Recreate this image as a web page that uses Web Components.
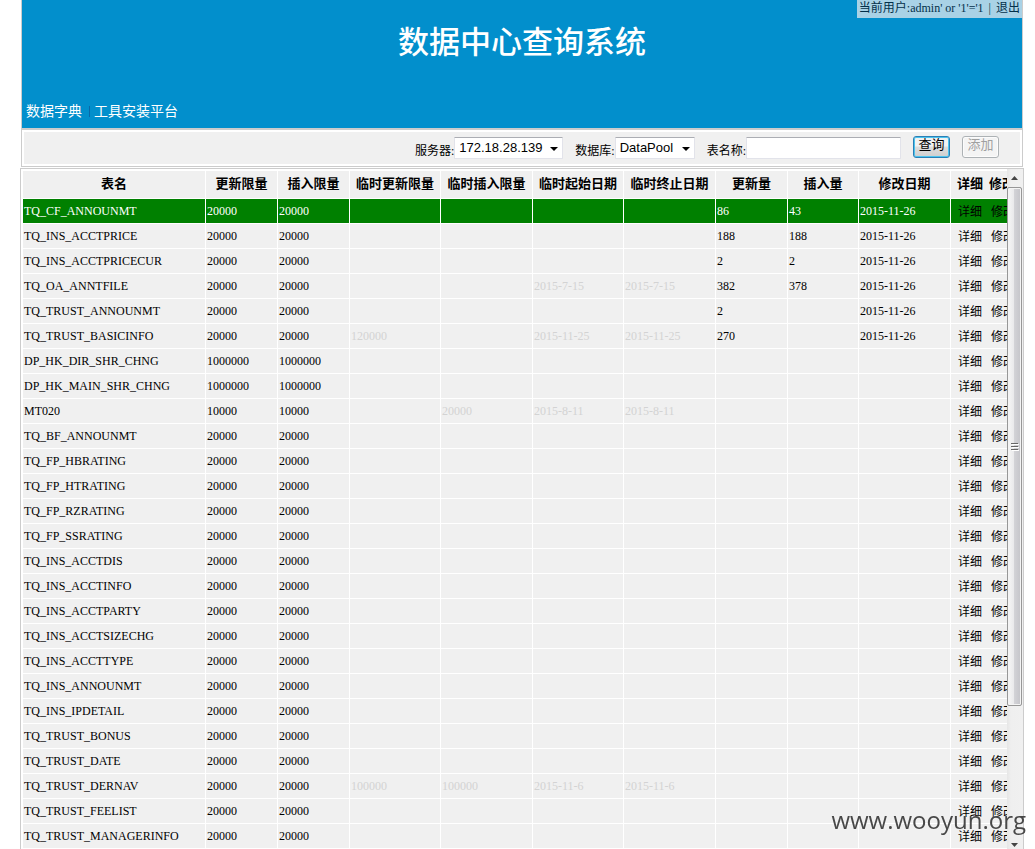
<!DOCTYPE html>
<html lang="zh-CN">
<head>
<meta charset="utf-8">
<title>数据中心查询系统</title>
<style>
  html, body { margin: 0; height: 100%; overflow: hidden; }
  body {
    background: #fff;
    color: #000;
    font: 12px/18px "Liberation Serif", "Noto Sans CJK SC", serif;
  }
</style>
</head>
<body>
<data-center-app></data-center-app>

<template id="app-template">
  <style>
    :host { display: block; }
    .page {
      display: flex;
      flex-direction: column;
      height: calc(100vh + 6px);
      margin: 0 11px 0 20px;
    }
    site-banner, search-bar { margin: 0 1px; }
    search-bar { margin-bottom: 1px; }
    limit-table { flex: 1; min-height: 0; }
    site-mark { position: fixed; right: 9px; bottom: 12px; }
  </style>
  <div class="page">
    <site-banner>
      <span slot="title">数据中心查询系统</span>
      <span slot="user">当前用户:admin' or '1'='1</span>
    </site-banner>
    <search-bar></search-bar>
    <limit-table></limit-table>
  </div>
  <site-mark>www.wooyun.org</site-mark>
</template>

<template id="banner-template">
  <style>
    :host { display: block; }
    header {
      display: flex;
      flex-direction: column;
      position: relative;
      box-sizing: border-box;
      height: 130px;
      border: 1px solid #ccc;
      border-width: 0 1px 2px;
      background: #028fcc;
      color: #fff;
    }
    h1 {
      margin: 18px 0 0;
      text-align: center;
      font: 500 31px/44px "Noto Sans CJK SC", sans-serif;
    }
    nav {
      display: flex;
      align-items: center;
      margin: auto 0 8px 4px;
      font: 14px/20px "Noto Sans CJK SC", sans-serif;
    }
    a { color: inherit; text-decoration: none; }
    .bar { width: 1px; height: 11px; margin: 3px 4px 0 7px; background: #0868a8; }
    .user {
      position: absolute;
      top: 0;
      right: 0;
      height: 18px;
      padding: 0 2px;
      background: #a9d2e6;
      color: #03304a;
      line-height: 16px;
      white-space: pre;
    }
    .user i { font-style: normal; margin: 0 5px; }
  </style>
  <header>
    <h1><slot name="title"></slot></h1>
    <nav>
      <a href="#dictionary">数据字典</a><span class="bar"></span><a href="#tools">工具安装平台</a>
    </nav>
    <div class="user"><slot name="user"></slot><i>|</i><a href="#logout">退出</a></div>
  </header>
</template>

<template id="search-template">
  <style>
    :host { display: block; }
    form {
      display: flex;
      justify-content: flex-end;
      align-items: flex-start;
      gap: 12px;
      box-sizing: border-box;
      height: 37px;
      padding: 5px 23px 0 0;
      margin: 0;
      border: 1px solid #ccc;
      border-top: 0;
      background: #f0f0f0;
      box-shadow: inset 0 0 0 2px #fff;
    }
    .field { display: flex; align-items: flex-start; }
    .field label { padding: 6px 0 0; line-height: 20px; }
    .pick { position: relative; display: flex; margin-top: 2px; }
    .pick svg { position: absolute; right: 4px; top: 10px; pointer-events: none; }
    select, input {
      appearance: none;
      box-sizing: border-box;
      height: 22px;
      margin: 0;
      padding: 0 4px;
      border: 1px solid #e2e3ea;
      border-top-color: #abadb3;
      border-radius: 1px;
      background: #fff;
      color: #000;
      font: 13px/18px "Liberation Sans", sans-serif;
      outline: 0;
    }
    select { padding-bottom: 1px; }
    input { width: 155px; margin-top: 2px; }
    .server { width: 109px; }
    .base { width: 80px; }
    button {
      box-sizing: border-box;
      width: 37px;
      height: 22px;
      margin-top: 1px;
      padding: 0;
      border: 1px solid #2c7fb5;
      border-radius: 3px;
      background: linear-gradient(#f2f2f2 0 45%, #dddddd 50%, #cfcfcf);
      box-shadow: inset 0 0 0 1px #4cc4ee;
      color: #000;
      font: 13px/14px "Noto Sans CJK SC", sans-serif;
    }
    button span { display: block; height: 20px; }
    button:disabled {
      border-color: #adb2b5;
      background: #f4f4f4;
      box-shadow: inset 0 0 0 1px #fcfcfc;
      color: #a0a0a0;
    }
  </style>
  <form>
    <div class="field">
      <label for="server">服务器:</label>
      <div class="pick">
        <select id="server" class="server"><option>172.18.28.139</option></select>
        <svg width="9" height="5" viewBox="0 0 9 5"><path d="M0 0h8L4 4z"/></svg>
      </div>
    </div>
    <div class="field">
      <label for="base">数据库:</label>
      <div class="pick">
        <select id="base" class="base"><option>DataPool</option></select>
        <svg width="9" height="5" viewBox="0 0 9 5"><path d="M0 0h8L4 4z"/></svg>
      </div>
    </div>
    <div class="field">
      <label for="name">表名称:</label>
      <input id="name" type="text">
    </div>
    <button type="button"><span>查询</span></button>
    <button type="button" disabled><span>添加</span></button>
  </form>
</template>

<template id="table-template">
  <style>
    :host {
      display: flex;
      box-sizing: border-box;
      border: 1px solid #ccc;
    }
    .view { flex: 1; min-width: 0; overflow: hidden; padding: 2px 0 0 2px; }
    table { width: 100%; table-layout: fixed; border-collapse: separate; border-spacing: 0; }
    th, td {
      box-sizing: border-box;
      border: 0 solid #fff;
      border-width: 0 1px 1px 0;
      padding: 0 0 0 1px;
      overflow: hidden;
      white-space: nowrap;
      background: #f0f0f0;
      background-clip: padding-box;
    }
    td { height: 25px; line-height: 24px; text-align: left; }
    th { height: 28px; padding: 0 0 3px; font: bold 13px/24px "Noto Sans CJK SC", sans-serif; text-align: center; }
    th:last-child { padding-left: 6px; text-align: left; border-right: 0; text-overflow: clip; }
    td:last-child { padding: 2px 0 0 7px; line-height: 22px; border-right: 0; }
    th span + span { margin-left: 6px; }
    a { color: #000; text-decoration: none; }
    a + a { margin-left: 9px; }
    .temp { color: #d3d3d3; }
    .current td { background-color: #008000; color: #fff; }
    .name { width: auto; } .num { width: 72px; } .numb { width: 71px; }
    .tmp { width: 91px; } .date { width: 92px; } .act { width: 56px; }
  </style>
  <div class="view">
    <table>
      <colgroup>
        <col class="name"><col class="num"><col class="num"><col class="tmp"><col class="date"><col class="tmp">
        <col class="date"><col class="num"><col class="numb"><col class="date"><col class="act">
      </colgroup>
      <thead>
        <tr><th>表名</th><th>更新限量</th><th>插入限量</th><th>临时更新限量</th><th>临时插入限量</th><th>临时起始日期</th><th>临时终止日期</th><th>更新量</th><th>插入量</th><th>修改日期</th><th><span>详细</span><span>修改</span></th></tr>
      </thead>
      <tbody></tbody>
    </table>
  </div>
  <scroll-rail></scroll-rail>
</template>

<template id="rail-template">
  <style>
    :host {
      display: flex;
      flex-direction: column;
      flex: none;
      width: 16px;
      background: linear-gradient(90deg, #e6e6e6, #efefef 25%, #f0f0f0);
    }
    .end { display: flex; align-items: center; justify-content: center; height: 18px; flex: none; }
    .track { flex: 1; min-height: 0; }
    .thumb {
      display: flex;
      align-items: center;
      justify-content: center;
      box-sizing: border-box;
      width: 15px;
      height: 80%;
      border: 1px solid #979797;
      border-radius: 2px;
      background: linear-gradient(90deg, #f6f6f6, #e9e9eb 45%, #d2d2d6 50%, #c4c4c9);
      box-shadow: inset 0 0 0 1px #f4f4f4;
    }
  </style>
  <div class="end"><svg width="8" height="4" viewBox="0 0 8 4"><path d="M0 4L3.500 0L7 4z" fill="#444"/></svg></div>
  <div class="track">
    <div class="thumb"><svg width="8" height="8" viewBox="0 0 8 8"><path d="M0 .5h7M0 3.500h7M0 6.500h7" stroke="#666"/><path d="M1 1.500h7M1 4.500h7M1 7.500h7" stroke="#fff"/></svg></div>
  </div>
  <div class="end"><svg width="8" height="4" viewBox="0 0 8 4"><path d="M0 0L3.500 4L7 0z" fill="#444"/></svg></div>
</template>

<template id="mark-template">
  <style>
    :host {
      display: block;
      color: #484848;
      font: 24px/34px "Open Sans", sans-serif;
      white-space: nowrap;
      pointer-events: none;
    }
  </style>
  <slot></slot>
</template>

<script>
  class TemplateElement extends HTMLElement {
    constructor() {
      super();
      const template = document.getElementById(this.constructor.template);
      this.attachShadow({ mode: 'open' }).append(template.content.cloneNode(true));
    }
  }

  class SiteMark extends TemplateElement { static template = 'mark-template'; }
  class ScrollRail extends TemplateElement { static template = 'rail-template'; }
  class SiteBanner extends TemplateElement { static template = 'banner-template'; }
  class SearchBar extends TemplateElement { static template = 'search-template'; }

  // name, update limit, insert limit, temporary update / insert limit,
  // temporary start / end date, updated, inserted, modified
  const rows = `
TQ_CF_ANNOUNMT,20000,20000,,,,,86,43,2015-11-26
TQ_INS_ACCTPRICE,20000,20000,,,,,188,188,2015-11-26
TQ_INS_ACCTPRICECUR,20000,20000,,,,,2,2,2015-11-26
TQ_OA_ANNTFILE,20000,20000,,,2015-7-15,2015-7-15,382,378,2015-11-26
TQ_TRUST_ANNOUNMT,20000,20000,,,,,2,,2015-11-26
TQ_TRUST_BASICINFO,20000,20000,120000,,2015-11-25,2015-11-25,270,,2015-11-26
DP_HK_DIR_SHR_CHNG,1000000,1000000
DP_HK_MAIN_SHR_CHNG,1000000,1000000
MT020,10000,10000,,20000,2015-8-11,2015-8-11
TQ_BF_ANNOUNMT,20000,20000
TQ_FP_HBRATING,20000,20000
TQ_FP_HTRATING,20000,20000
TQ_FP_RZRATING,20000,20000
TQ_FP_SSRATING,20000,20000
TQ_INS_ACCTDIS,20000,20000
TQ_INS_ACCTINFO,20000,20000
TQ_INS_ACCTPARTY,20000,20000
TQ_INS_ACCTSIZECHG,20000,20000
TQ_INS_ACCTTYPE,20000,20000
TQ_INS_ANNOUNMT,20000,20000
TQ_INS_IPDETAIL,20000,20000
TQ_TRUST_BONUS,20000,20000
TQ_TRUST_DATE,20000,20000
TQ_TRUST_DERNAV,20000,20000,100000,100000,2015-11-6,2015-11-6
TQ_TRUST_FEELIST,20000,20000
TQ_TRUST_MANAGERINFO,20000,20000`.trim().split('\n').map(line => line.split(','));

  class LimitTable extends TemplateElement {
    static template = 'table-template';
    connectedCallback() {
      const body = this.shadowRoot.querySelector('tbody');
      body.replaceChildren();
      rows.forEach((row, index) => {
        const tr = body.insertRow();
        if (index === 0) tr.className = 'current';
        for (let i = 0; i < 10; i++) {
          const td = tr.insertCell();
          td.textContent = row[i] || '';
          if (i > 2 && i < 7) td.className = 'temp';
        }
        tr.insertCell().innerHTML = '<a href="#detail">详细</a><a href="#edit">修改</a>';
      });
    }
  }

  class DataCenterApp extends TemplateElement { static template = 'app-template'; }

  customElements.define('site-mark', SiteMark);
  customElements.define('scroll-rail', ScrollRail);
  customElements.define('site-banner', SiteBanner);
  customElements.define('search-bar', SearchBar);
  customElements.define('limit-table', LimitTable);
  customElements.define('data-center-app', DataCenterApp);
</script>
</body>
</html>
